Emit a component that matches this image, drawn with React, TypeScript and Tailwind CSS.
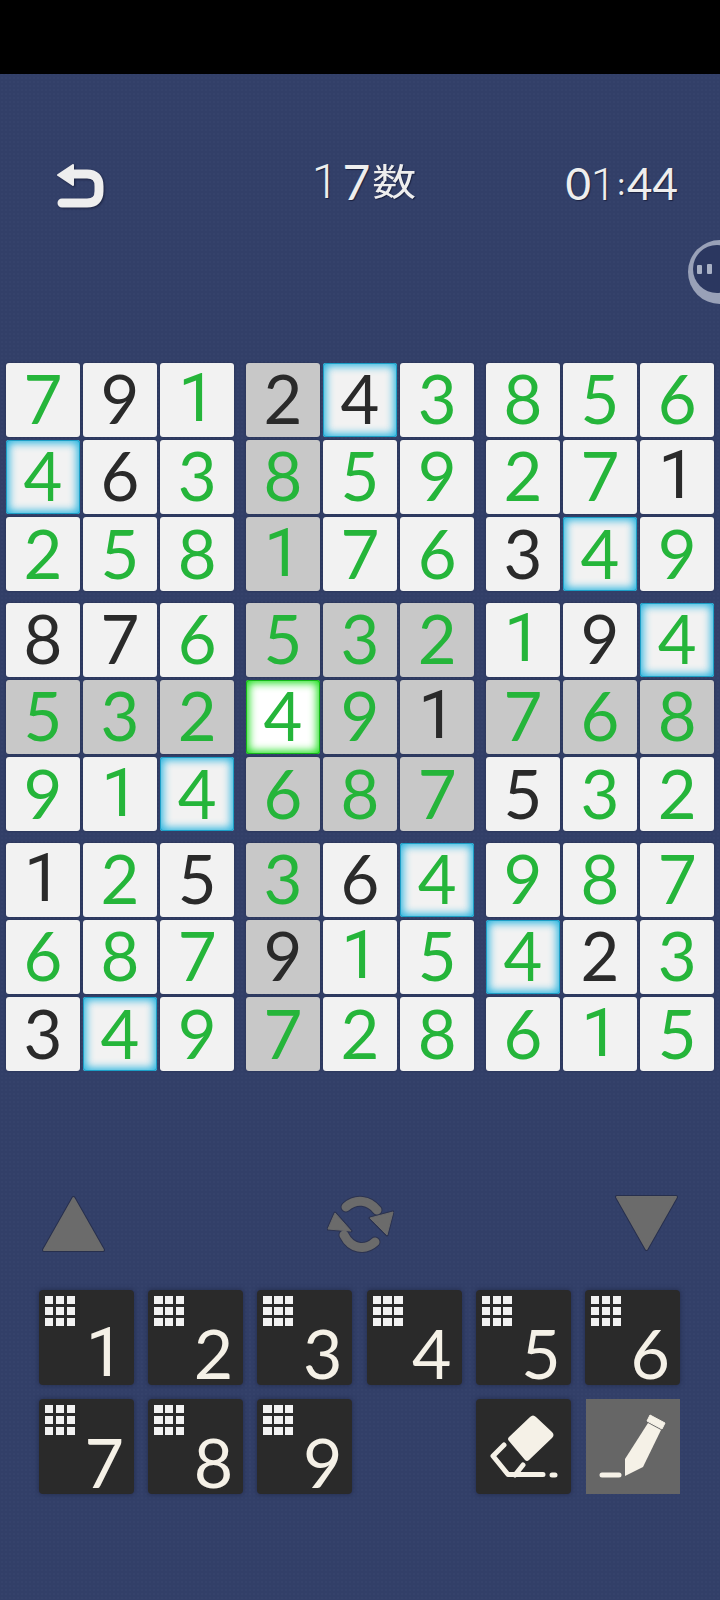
const board = [
  [7, 9, 1, 2, 4, 3, 8, 5, 6],
  [4, 6, 3, 8, 5, 9, 2, 7, 1],
  [2, 5, 8, 1, 7, 6, 3, 4, 9],
  [8, 7, 6, 5, 3, 2, 1, 9, 4],
  [5, 3, 2, 4, 9, 1, 7, 6, 8],
  [9, 1, 4, 6, 8, 7, 5, 3, 2],
  [1, 2, 5, 3, 6, 4, 9, 8, 7],
  [6, 8, 7, 9, 1, 5, 4, 2, 3],
  [3, 4, 9, 7, 2, 8, 6, 1, 5],
];

// cells given by the puzzle, drawn black instead of green
const givens = ['0-1', '0-3', '0-4', '1-1', '1-8', '2-6', '3-0', '3-1', '3-7', '4-5', '5-6', '6-0', '6-2', '6-4', '7-3', '7-7', '8-0'];

const selected = { r: 4, c: 3 };

// Lato's 1 has a foot, Roboto's has none
function Digit({ n }: { n: number }) {
  return n === 1 ? <span className="font-['Roboto',sans-serif]">1</span> : <span>{n}</span>;
}

function Cell({ r, c }: { r: number; c: number }) {
  const value = board[r][c];
  const isSelected = r === selected.r && c === selected.c;
  const sameBox = Math.floor(r / 3) === 1 && Math.floor(c / 3) === 1;
  const isGray = r === selected.r || c === selected.c || sameBox;
  const isMatch = value === 4 && !isSelected;

  let look = 'bg-[#f2f2f2] shadow-[0_0_2px_#1f2747]';
  if (isGray) look = 'bg-[#c8c8c8] shadow-[0_0_2px_#1f2747]';
  if (isMatch) look = 'bg-[#f2f2f2] shadow-[inset_0_0_0_1px_#1c9fc6,inset_0_0_8px_3px_#27b4e0]';
  if (isSelected) look = 'bg-white shadow-[inset_0_0_0_1px_#14b818,inset_0_0_8px_3px_#1ee01e]';

  return (
    <div className={`h-[73.67px] pb-[2px] rounded-[3px] flex items-center justify-center text-[67px] leading-none ${look} ${givens.includes(`${r}-${c}`) ? 'text-[#2a2a2a]' : 'text-[#25b53a]'}`}>
      <Digit n={value} />
    </div>
  );
}

function Box({ r, c }: { r: number; c: number }) {
  const offsets = [0, 1, 2];
  return (
    <div className="grid grid-cols-3 gap-[3.5px] w-[228px]">
      {offsets.map((i) => offsets.map((j) => <Cell key={`${i}-${j}`} r={r + i} c={c + j} />))}
    </div>
  );
}

function NumKey({ n }: { n: number }) {
  return (
    <div className="w-[95px] h-[95px] rounded-[4px] bg-[#2a2a2a] shadow-[0_0_5px_#232b4a] pl-[6px] pt-[6px] pr-[10px] pb-[3px] flex justify-between">
      <div className="grid grid-cols-3 gap-[2.5px] w-[30px] h-[30px]">
        {Array.from({ length: 9 }).map((_, i) => (
          <div key={i} className="bg-[#f2f2f2]" />
        ))}
      </div>
      <span className="self-end text-[68px] leading-[58px] text-[#f5f1e7]">
        <Digit n={n} />
      </span>
    </div>
  );
}

function BackIcon() {
  return (
    <svg width="49" height="46" viewBox="0 0 49 46" className="drop-shadow-[1px_1px_1px_#1b2240]">
      <path d="M16 10H31Q43 10 43 22V27Q43 39 31 39H6" fill="none" stroke="#eeeeee" strokeWidth="9" strokeLinecap="round" />
      <path d="M2 11L17 1V21Z" fill="#eeeeee" stroke="#eeeeee" strokeWidth="2" strokeLinejoin="round" />
    </svg>
  );
}

function Triangle({ down }: { down?: boolean }) {
  return (
    <svg width="63" height="57" viewBox="0 0 63 57" className={down ? 'rotate-180' : ''}>
      <path d="M31.5 3L61 55H2Z" fill="#6b6b6b" stroke="#272f4d" strokeWidth="4" strokeLinejoin="round" />
      <path d="M31.5 3L61 55H2Z" fill="#6b6b6b" stroke="#6b6b6b" strokeWidth="2" strokeLinejoin="round" />
    </svg>
  );
}

function RefreshIcon() {
  const arcs = 'M19 12C29 3 42 5 50 15M48 47C38 56 24 54 17 40';
  const heads = 'M43 23L66 17L60 40ZM1 34L8 18L24 36Z';
  return (
    <svg width="67" height="58" viewBox="0 0 67 58">
      <path d={arcs} fill="none" stroke="#2c3350" strokeWidth="11" strokeLinecap="round" />
      <path d={heads} fill="#2c3350" stroke="#2c3350" strokeWidth="3" strokeLinejoin="round" />
      <path d={arcs} fill="none" stroke="#6b6b6b" strokeWidth="9" strokeLinecap="round" />
      <path d={heads} fill="#6b6b6b" stroke="#6b6b6b" strokeWidth="1" strokeLinejoin="round" />
    </svg>
  );
}

function EraserIcon() {
  return (
    <svg width="95" height="95" viewBox="0 0 95 95">
      <path d="M54 18Q57 15 60 18L76 33Q79 36 76 39L53 61Q51 63 49 61L33 42Q31 40 33 38Z" fill="#f5f1e7" />
      <path d="M28 46L17 57L32 75.5H67M47 66L39 76" fill="none" stroke="#f5f1e7" strokeWidth="5" strokeLinecap="round" strokeLinejoin="round" />
      <path d="M76 76H79" fill="none" stroke="#f5f1e7" strokeWidth="5" strokeLinecap="round" />
    </svg>
  );
}

function PencilIcon() {
  return (
    <svg width="94" height="95" viewBox="0 0 94 95">
      <path d="M39 77V60L62 24L75 31L57 68Z" fill="#f5f1e7" />
      <path d="M64 16L79 24L76 30L61 22Z" fill="#f5f1e7" stroke="#f5f1e7" strokeLinejoin="round" />
      <path d="M16 76H33" fill="none" stroke="#f5f1e7" strokeWidth="5" strokeLinecap="round" />
    </svg>
  );
}

export default function App() {
  const bands = [0, 3, 6];
  return (
    <div className="relative w-[720px] h-[1600px] overflow-hidden bg-[#323f68] bg-[radial-gradient(#35426b_1px,transparent_1px)] bg-[size:4px_4px] font-['Lato','Noto_Sans_CJK_JP',sans-serif]">
      <div className="h-[74px] bg-black" />

      {/* Header */}
      <div className="mt-[84px] pl-[56px] pr-[42px] h-[46px] grid grid-cols-3 items-center text-[#eeeeee] [text-shadow:1px_1px_1px_#1b2240]">
        <BackIcon />
        <span className="flex items-center justify-center text-[48px] leading-none ml-[-6px] mb-[10px]">
          <span className="font-['Roboto',sans-serif] font-light">1</span>
          <span className="ml-[4px]">7</span>
          <span className="inline-block text-[44px] ml-[2px] scale-y-[0.85]">数</span>
        </span>
        <span className="text-right text-[44px] leading-none mb-[6px]">
          0<span className="font-['Roboto',sans-serif] font-light">1</span>
          <span className="text-[30px] align-[5px] mx-[2px]">:</span>44
        </span>
      </div>

      {/* Floating assistant */}
      <div className="absolute left-[688px] top-[240px] w-[64px] h-[64px] rounded-full bg-[#99a1b8] p-[5px]">
        <div className="w-[48px] h-[48px] rounded-full bg-[#2b3760] flex items-center gap-[5px] pl-[4px]">
          <div className="w-[5px] h-[9px] rounded-[1px] bg-[#a8b0c4]" />
          <div className="w-[5px] h-[10px] rounded-[1px] bg-[#a8b0c4]" />
        </div>
      </div>

      {/* Board */}
      <div className="mt-[159px] px-[6px] flex flex-col gap-[12px]">
        {bands.map((r) => (
          <div key={r} className="flex gap-[12px]">
            {bands.map((c) => (
              <Box key={c} r={r} c={c} />
            ))}
          </div>
        ))}
      </div>

      {/* Controls */}
      <div className="mt-[124px] px-[42px] flex items-center justify-between">
        <Triangle />
        <RefreshIcon />
        <Triangle down />
      </div>

      {/* Number pad */}
      <div className="mt-[37px] ml-[39px] grid grid-cols-[repeat(6,95px)] gap-x-[14.2px] gap-y-[14px]">
        {[1, 2, 3, 4, 5, 6, 7, 8, 9].map((n) => (
          <NumKey key={n} n={n} />
        ))}
        <div />
        <div className="w-[95px] h-[95px] rounded-[4px] bg-[#2a2a2a] shadow-[0_0_5px_#232b4a]">
          <EraserIcon />
        </div>
        <div className="w-[94px] h-[95px] ml-[1px] bg-[#666666]">
          <PencilIcon />
        </div>
      </div>
    </div>
  );
}
